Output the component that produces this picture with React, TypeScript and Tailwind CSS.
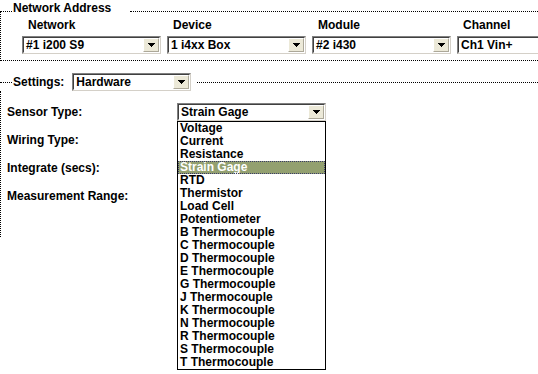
import React from "react";

const sensorTypes = [
  "Voltage",
  "Current",
  "Resistance",
  "Strain Gage",
  "RTD",
  "Thermistor",
  "Load Cell",
  "Potentiometer",
  "B Thermocouple",
  "C Thermocouple",
  "D Thermocouple",
  "E Thermocouple",
  "G Thermocouple",
  "J Thermocouple",
  "K Thermocouple",
  "N Thermocouple",
  "R Thermocouple",
  "S Thermocouple",
  "T Thermocouple",
];

const Arrow: React.FC = () => (
  <svg width="7" height="4" viewBox="0 0 7 4" shapeRendering="crispEdges">
    <path d="M0 0h7v1h-1v1h-1v1h-1v1h-1v-1h-1v-1h-1v-1h-1z" fill="#000" />
  </svg>
);

const Combo: React.FC<{ text: string; className?: string; noButton?: boolean }> = ({
  text,
  className = "",
  noButton,
}) => (
  <div
    className={`flex h-[18px] shrink-0 border border-t-[#808080] border-l-[#808080] border-b-[#d4d0c8] border-r-[#d4d0c8] bg-white ${className}`}
  >
    <div className="flex flex-1 min-w-0 border border-t-[#404040] border-l-[#404040] border-b-white border-r-white">
      <div className="flex-1 min-w-0 pl-[2px] leading-[14px] whitespace-nowrap overflow-hidden">
        {text}
      </div>
      {!noButton && (
        <div className="flex w-[16px] items-center justify-center border border-t-white border-l-white border-b-[#aca899] border-r-[#aca899] bg-[#ece9d8]">
          <Arrow />
        </div>
      )}
    </div>
  </div>
);

const networkCols = [
  { label: "Network", value: "#1 i200 S9" },
  { label: "Device", value: "1 i4xx Box" },
  { label: "Module", value: "#2 i430" },
  { label: "Channel", value: "Ch1 Vin+", last: true },
];

const settingRows = ["Sensor Type:", "Wiring Type:", "Integrate (secs):", "Measurement Range:"];

const App: React.FC = () => {
  return (
    <div className="w-[538px] h-[374px] overflow-hidden bg-white text-black font-['Liberation_Sans',Arial,sans-serif] font-bold text-[12px]">
      {/* Network Address group */}
      <div className="flex items-end h-[12px]">
        <div className="w-[12px] h-full border-b border-dotted border-black" />
        <span className="px-[1px] leading-[13px] translate-y-[3px]">Network Address</span>
        <div className="w-[18px]" />
        <div className="flex-1 h-full border-b border-dotted border-black" />
      </div>
      <div className="flex gap-[6px] h-[49px] border-l border-b border-dotted border-black pl-[21px] pt-[6px]">
        {networkCols.map((c) => (
          <div key={c.label} className="flex flex-col shrink-0">
            <div className="pl-[6px] h-[14px] leading-[14px]">{c.label}</div>
            <Combo
              text={c.value}
              noButton={c.last}
              className={`mt-[4px] ${c.last ? "w-[100px] border-r-0" : "w-[139px]"}`}
            />
          </div>
        ))}
      </div>

      {/* Settings group */}
      <div className="flex items-center h-[18px] mt-[12px]">
        <div className="w-[12px] border-t border-dotted border-black" />
        <span className="pl-[1px] leading-[14px]">Settings:</span>
        <Combo text="Hardware" className="ml-[8px] w-[119px]" />
        <div className="w-[6px]" />
        <div className="flex-1 border-t border-dotted border-black" />
      </div>
      <div className="border-l border-dotted border-black h-[146px] pl-[6px] pt-[7px]">
        {settingRows.map((label, i) => (
          <div key={label} className="flex items-center h-[28px]">
            <div className="w-[170px] leading-[14px]">{label}</div>
            {i === 0 && (
              <div className="relative">
                <Combo text="Strain Gage" className="w-[149px]" />
                <div className="absolute left-0 top-full w-[149px] border border-black bg-white">
                  {sensorTypes.map((t) => (
                    <div
                      key={t}
                      className={`h-[13px] leading-[13px] pl-[2px] whitespace-nowrap ${
                        t === "Strain Gage"
                          ? "bg-[#93a070] text-white outline outline-1 outline-dotted outline-[#3a3a6a] -outline-offset-1"
                          : ""
                      }`}
                    >
                      {t}
                    </div>
                  ))}
                </div>
              </div>
            )}
          </div>
        ))}
      </div>
    </div>
  );
};

export default App;
